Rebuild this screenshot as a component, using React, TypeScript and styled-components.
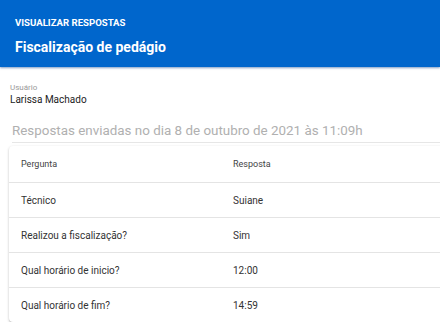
import React from "react";
import styled, { createGlobalStyle } from "styled-components";

const GlobalStyle = createGlobalStyle`
  body {
    margin: 0;
    background: #fff;
    font-family: Roboto, "Liberation Sans", sans-serif;
    overflow: hidden;
  }
`;

const Header = styled.header`
  height: 67px;
  box-sizing: border-box;
  background-color: #0066cc;
  box-shadow: 0 1px 2px rgba(0, 60, 140, 0.5);
  padding: 17px 15px 0;
  color: #fff;
`;

const Overline = styled.div`
  font-size: 9.6px;
  font-weight: 700;
  line-height: 12px;
`;

const Title = styled.h1`
  margin: 9px 0 0;
  font-size: 14px;
  font-weight: 700;
  line-height: 18px;
`;

const Content = styled.main`
  padding: 15px 0 0 9px;
`;

const Field = styled.div`
  padding-left: 1px;
`;

const Label = styled.div`
  font-size: 8px;
  color: #9a9a9a;
  line-height: 11px;
`;

const Value = styled.div`
  font-size: 10px;
  color: #222;
  line-height: 13px;
`;

const Subtitle = styled.div`
  margin: 16px 0 0 3px;
  font-size: 13.4px;
  color: #b0b0b0;
  line-height: 18px;
  padding-bottom: 2px;
  border-bottom: 1px solid #e6e6e6;
`;

const Paper = styled.div`
  margin-top: 3px;
  width: 460px;
  background: #fff;
  border-radius: 4px;
  box-shadow: 0 1px 3px rgba(0, 0, 0, 0.2), 0 1px 1px rgba(0, 0, 0, 0.14);
`;

const Table = styled.table`
  width: 100%;
  border-collapse: collapse;
`;

const Th = styled.th<{ $w?: number }>`
  height: 36px;
  padding: 0 0 0 12px;
  text-align: left;
  font-weight: 400;
  font-size: 9px;
  color: #444;
  border-bottom: 1px solid #e4e4e4;
  width: ${(p) => (p.$w ? `${p.$w}px` : "auto")};
`;

const Td = styled.td`
  height: 34px;
  padding: 0 0 0 12px;
  font-size: 10px;
  color: #333;
  border-bottom: 1px solid #e4e4e4;
  tr:last-child & {
    border-bottom: none;
  }
`;

const rows = [
  ["Técnico", "Suiane"],
  ["Realizou a fiscalização?", "Sim"],
  ["Qual horário de inicio?", "12:00"],
  ["Qual horário de fim?", "14:59"],
];

export default function App() {
  return (
    <>
      <GlobalStyle />
      <Header>
        <Overline>VISUALIZAR RESPOSTAS</Overline>
        <Title>Fiscalização de pedágio</Title>
      </Header>
      <Content>
        <Field>
          <Label>Usuário</Label>
          <Value>Larissa Machado</Value>
        </Field>
        <Subtitle>Respostas enviadas no dia 8 de outubro de 2021 às 11:09h</Subtitle>
        <Paper>
          <Table>
            <thead>
              <tr>
                <Th $w={200}>Pergunta</Th>
                <Th>Resposta</Th>
              </tr>
            </thead>
            <tbody>
              {rows.map(([q, a]) => (
                <tr key={q}>
                  <Td>{q}</Td>
                  <Td>{a}</Td>
                </tr>
              ))}
            </tbody>
          </Table>
        </Paper>
      </Content>
    </>
  );
}
